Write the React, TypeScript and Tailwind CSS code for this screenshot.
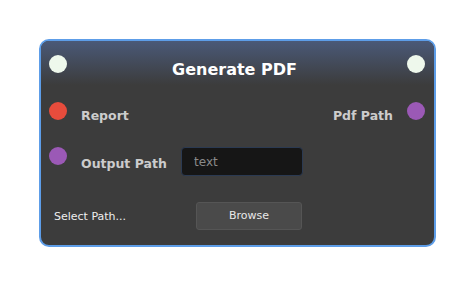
export default function App() {
  return (
    <div
      className="flex h-[286px] w-full items-center justify-center bg-white"
      style={{ fontFamily: '"DejaVu Sans", Verdana, sans-serif' }}
    >
      <div className="flex h-[208px] w-[397px] flex-col overflow-hidden rounded-[10px] border-2 border-[#5d9de8] bg-[#3c3c3c]">
        {/* Header */}
        <div className="flex h-[44px] shrink-0 items-start bg-gradient-to-b from-[#4a5978] to-[#3c3c3c] px-2">
          <div className="mt-[14px] h-[18px] w-[18px] shrink-0 rounded-full bg-[#eef8ec]" />
          <div className="mt-[19px] flex-1 pr-[5px] text-center text-[16px] font-bold leading-[20px] text-white">
            Generate PDF
          </div>
          <div className="mt-[14px] mr-px h-[18px] w-[18px] shrink-0 rounded-full bg-[#eef8ec]" />
        </div>

        {/* Report / Pdf Path */}
        <div className="flex h-[55px] shrink-0 items-start px-2">
          <div className="mt-[17px] h-[18px] w-[18px] shrink-0 rounded-full bg-[#e74c3c]" />
          <div className="ml-[14px] mt-[24px] text-[12.5px] font-bold leading-[14px] text-[#cccccc]">Report</div>
          <div className="flex-1" />
          <div className="mr-[14px] mt-[24px] text-[12.5px] font-bold leading-[14px] text-[#cccccc]">Pdf Path</div>
          <div className="mt-[17px] mr-px h-[18px] w-[18px] shrink-0 rounded-full bg-[#9b59b6]" />
        </div>

        {/* Output Path */}
        <div className="flex h-[50px] shrink-0 items-start px-2">
          <div className="mt-[7px] h-[18px] w-[18px] shrink-0 rounded-full bg-[#9b59b6]" />
          <div className="ml-[14px] mt-[17px] w-[100px] text-[12.5px] font-bold leading-[14px] text-[#cccccc]">
            Output Path
          </div>
          <input
            placeholder="text"
            className="mt-[7px] h-[29px] w-[122px] rounded-[4px] border border-[#2b3a52] bg-[#161616] px-3 text-[12px] text-[#dddddd] outline-none placeholder:text-[#8a8a8a]"
          />
        </div>

        {/* Select Path */}
        <div className="flex shrink-0 items-start pl-[13px]">
          <div className="mt-[20px] w-[142px] text-[11px] leading-[13px] text-[#eeeeee]">Select Path...</div>
          <button className="mt-[12px] h-[28px] w-[106px] rounded-[3px] border border-[#555555] bg-[#4a4a4a] text-[11px] text-[#e8e8e8]">
            Browse
          </button>
        </div>
      </div>
    </div>
  );
}
